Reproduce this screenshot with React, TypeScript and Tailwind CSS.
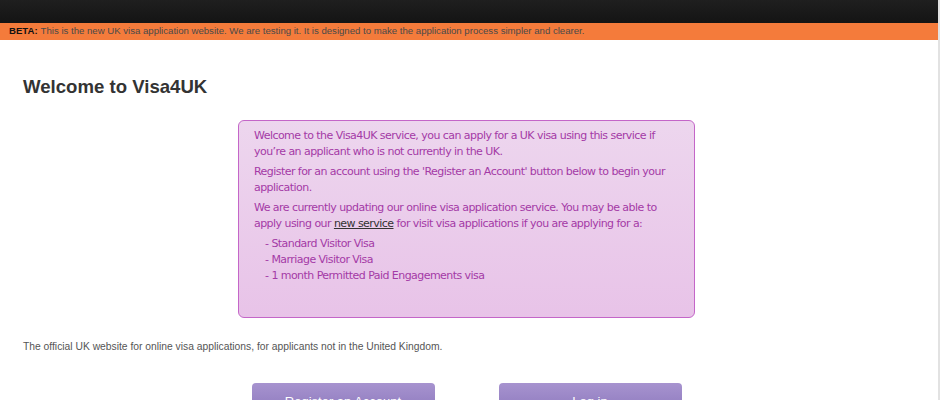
import React from 'react'

const visaTypes = [
  'Standard Visitor Visa',
  'Marriage Visitor Visa',
  '1 month Permitted Paid Engagements visa',
]

export default function App() {
  return (
    <div className="min-h-[400px] w-[940px] overflow-hidden border-r-2 border-[#e2e2e2] bg-white font-['Liberation_Sans',Arial,sans-serif]">
      {/* top bar */}
      <div className="h-[23px] bg-gradient-to-b from-[#1f1f1f] to-[#141414]" />

      {/* beta banner */}
      <div className="flex h-[17px] items-center bg-[#f47b3b] pl-[9px] text-[9.6px] text-[#4a4a4a]">
        <span className="mr-[3px] font-bold text-[#111]">BETA:</span>
        This is the new UK visa application website. We are testing it. It is designed to make the application process simpler and clearer.
      </div>

      <div className="ml-[23px] w-[887px]">
        <h1 className="mt-[35px] text-[18.6px] font-bold leading-[24px] text-[#333]">Welcome to Visa4UK</h1>

        <div className="mx-auto mt-[21px] h-[198px] w-[457px] rounded-[6px] border border-[#c466c8] bg-gradient-to-b from-[#edd6ee] to-[#e8c3e8] px-[15px] pt-[7px] font-['DejaVu_Sans',Verdana,sans-serif] text-[11px] leading-[15.5px] tracking-[-0.55px] text-[#a43aa6]">
          <p>Welcome to the Visa4UK service, you can apply for a UK visa using this service if you’re an applicant who is not currently in the UK.</p>
          <p className="mt-[5px]">Register for an account using the 'Register an Account' button below to begin your application.</p>
          <p className="mt-[5px]">
            We are currently updating our online visa application service. You may be able to apply using our{' '}
            <a className="text-[#333] underline">new service</a> for visit visa applications if you are applying for a:
          </p>
          <ul className="mt-[5px] pl-[11px]">
            {visaTypes.map((v) => (
              <li key={v} className="leading-[16px]">- {v}</li>
            ))}
          </ul>
        </div>

        <p className="mt-[21px] text-[10.3px] text-[#555]">The official UK website for online visa applications, for applicants not in the United Kingdom.</p>

        <div className="mt-[29px] flex justify-center gap-[64px]">
          <button className="h-[34px] w-[183px] rounded-t-[4px] bg-gradient-to-b from-[#a793cf] to-[#8a76bb] pt-[2px] text-[13px] text-white">Register an Account</button>
          <button className="h-[34px] w-[183px] rounded-t-[4px] bg-gradient-to-b from-[#a793cf] to-[#8a76bb] pt-[2px] text-[13px] text-white">Log in</button>
        </div>
      </div>
    </div>
  )
}
